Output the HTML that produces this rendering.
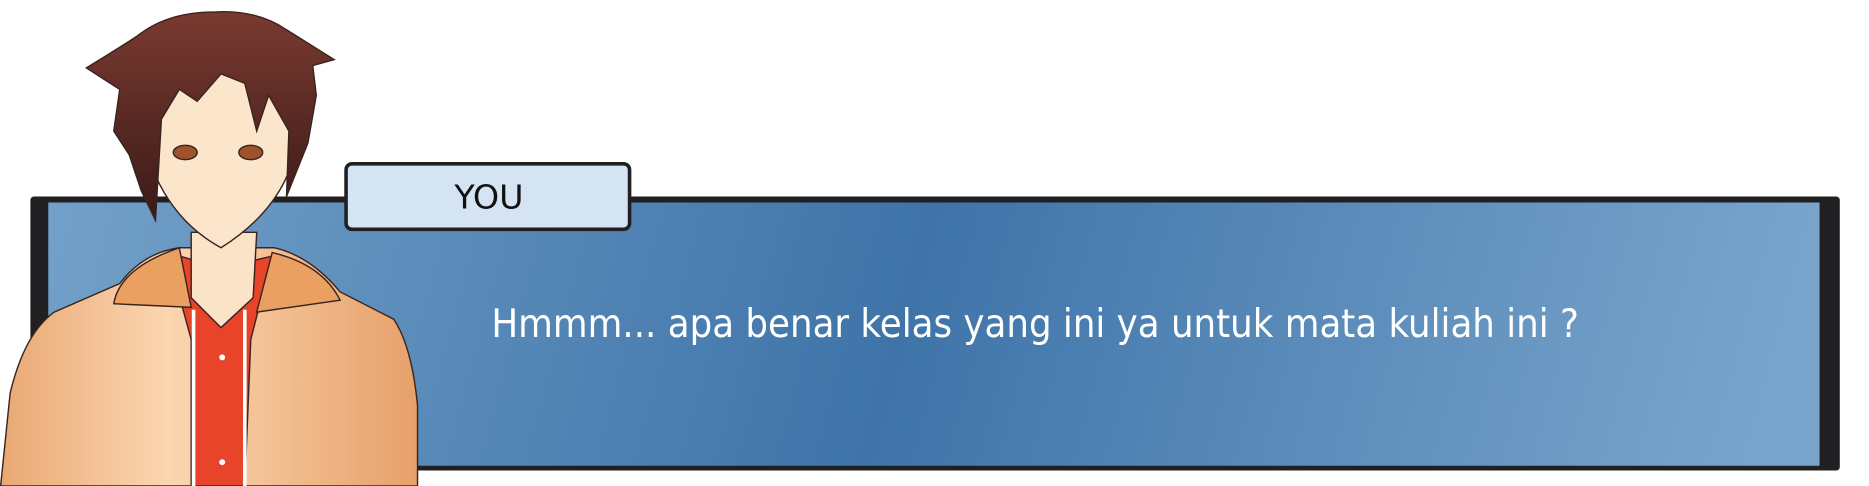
<!DOCTYPE html>
<html><head><meta charset="utf-8"><style>
html,body{margin:0;padding:0;background:#fff;overflow:hidden}
svg{display:block}
</style></head><body>
<svg width="1869" height="486" viewBox="0 0 1568 408" xmlns="http://www.w3.org/2000/svg">
<defs>
<linearGradient id="bg" x1="0" y1="0" x2="1" y2="0.04">
<stop offset="0" stop-color="#72a0c8"/>
<stop offset="0.5" stop-color="#3f74a9"/>
<stop offset="1" stop-color="#79a5cc"/>
</linearGradient>
<linearGradient id="jk" x1="0" y1="0" x2="1" y2="0">
<stop offset="0" stop-color="#e9a874"/>
<stop offset="0.4" stop-color="#fbd6b0"/>
<stop offset="1" stop-color="#e7a06a"/>
</linearGradient>
<linearGradient id="hair" x1="0" y1="0" x2="0" y2="1">
<stop offset="0" stop-color="#7a3a30"/>
<stop offset="1" stop-color="#3a1a18"/>
</linearGradient>
</defs>
<rect x="25" y="165" width="1519" height="230" rx="3" fill="#202022"/>
<rect x="40" y="170" width="1487" height="221" fill="url(#bg)"/>
<text x="412" y="283" font-family="DejaVu Sans, sans-serif" font-size="33" fill="#fff" textLength="913" lengthAdjust="spacingAndGlyphs">Hmmm... apa benar kelas yang ini ya untuk mata kuliah ini  ?</text>
<g stroke="#3a2420" stroke-width="1.2">
<path d="M0 408 L8 330 Q20 280 45 262 L100 238 Q120 212 150 208 L230 208 Q260 215 285 245 L330 268 Q345 290 350 340 L350 408 Z" fill="url(#jk)"/>
<path d="M140 212 L160 285 L160 408 L205 408 L210 285 L228 215 L185 225 Z" fill="#e8442a"/>
<path d="M162 260 L162 408 M205 260 L205 408" stroke="#fff" stroke-width="3"/>
<path d="M95 255 Q100 225 150 208 L160 258 Z M228 212 Q270 222 285 252 L215 262 Z" fill="#e9a060"/>
<path d="M160 195 L215 195 L212 250 L185 275 L160 250 Z" fill="#fbe3c8"/>
<path d="M115 90 Q110 40 185 40 Q255 45 250 110 Q245 170 185 208 Q125 175 115 90 Z" fill="#fbe6cc"/>
<path d="M72 57 Q100 40 115 30 Q140 10 180 10 Q215 8 240 25 L280 50 L262 55 L265 80 L258 120 L240 165 L242 110 L225 80 L215 110 L205 70 L185 62 L165 85 L150 75 L135 100 L130 185 L118 160 L108 130 L95 110 L100 75 Z" fill="url(#hair)"/>
<ellipse cx="155" cy="128" rx="10" ry="6" fill="#a0522d"/>
<ellipse cx="210" cy="128" rx="10" ry="6" fill="#a0522d"/>
</g>
<circle cx="186" cy="300" r="2.5" fill="#fff"/>
<circle cx="186" cy="388" r="2.5" fill="#fff"/>
<rect x="290" y="137.5" width="238" height="55" rx="5" fill="#d4e4f2" stroke="#202022" stroke-width="3"/>
<text x="410" y="175" font-family="DejaVu Sans, sans-serif" font-size="28" fill="#111" text-anchor="middle">YOU</text>
</svg>
</body></html>
